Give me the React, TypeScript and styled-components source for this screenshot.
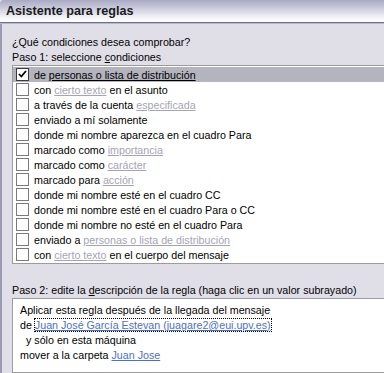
import React from "react";
import styled, { createGlobalStyle } from "styled-components";

const GlobalStyle = createGlobalStyle`
  html, body {
    margin: 0;
    padding: 0;
    overflow: hidden;
    background: #e0dfe8;
  }
`;

const Window = styled.div`
  width: 384px;
  height: 373px;
  overflow: hidden;
  background: #e0dfe8;
  font-family: Tahoma, "Liberation Sans", Arial, sans-serif;
  font-size: 10.7px;
  color: #000;
  display: flex;
  flex-direction: column;
`;

const TitleBar = styled.div`
  height: 22px;
  padding-left: 6px;
  display: flex;
  align-items: center;
  font-size: 12.6px;
  font-weight: bold;
  color: #1a1a1a;
  background: linear-gradient(#a9a9c2 0%, #c9c9da 35%, #f4f4f8 80%, #ffffff 100%);
  border-top-left-radius: 4px;
  border-bottom: 1px solid #6f6f8c;
  box-shadow: 0 1px 0 #b8b8cc;
`;

const Body = styled.div`
  flex: 1;
  border-left: 2px solid #9a9ab2;
  margin-top: 1px;
  padding: 11px 0 0 10px;
  display: flex;
  flex-direction: column;
`;

const Label = styled.div<{ $gap?: number }>`
  line-height: 15px;
  height: 15px;
  white-space: nowrap;
  margin-top: ${(p) => p.$gap ?? 0}px;
`;

const Key = styled.span`
  text-decoration: underline;
`;

const ListBox = styled.div`
  width: 420px;
  background: #fff;
  border: 1px solid #9c9c9c;
  padding: 1px 0;
`;

const Row = styled.div<{ $selected?: boolean }>`
  height: 15px;
  display: flex;
  align-items: center;
  white-space: nowrap;
  padding-left: 3px;
  background: ${(p) => (p.$selected ? "#b3b4bd" : "transparent")};
`;

const Check = styled.span<{ $on?: boolean }>`
  width: 11px;
  height: 11px;
  border: 1px solid ${(p) => (p.$on ? "#3a3a3a" : "#7a7a7a")};
  background: #fff;
  margin-right: 5px;
  display: inline-flex;
  align-items: center;
  justify-content: center;
  flex: none;
`;

const GrayLink = styled.span`
  color: #a4a4b4;
  text-decoration: underline;
`;

const DarkLink = styled.span`
  text-decoration: underline;
`;

const DescBox = styled.div`
  width: 420px;
  flex: 1;
  background: #fff;
  border: 1px solid #9c9c9c;
  padding: 4px 7px;
`;

const DescLine = styled.div<{ $indent?: number }>`
  height: 15px;
  line-height: 15px;
  white-space: nowrap;
  padding-left: ${(p) => p.$indent ?? 0}px;
`;

const BlueLink = styled.span<{ $focus?: boolean }>`
  color: #4a6fd0;
  text-decoration: underline;
  ${(p) => (p.$focus ? "outline: 1px dotted #000; outline-offset: 0;" : "")}
`;

type Part = string | { link: string };

const conditions: Part[][] = [
  ["de ", { link: "personas o lista de distribución" }],
  ["con ", { link: "cierto texto" }, " en el asunto"],
  ["a través de la cuenta ", { link: "especificada" }],
  ["enviado a mí solamente"],
  ["donde mi nombre aparezca en el cuadro Para"],
  ["marcado como ", { link: "importancia" }],
  ["marcado como ", { link: "carácter" }],
  ["marcado para ", { link: "acción" }],
  ["donde mi nombre esté en el cuadro CC"],
  ["donde mi nombre esté en el cuadro Para o CC"],
  ["donde mi nombre no esté en el cuadro Para"],
  ["enviado a ", { link: "personas o lista de distribución" }],
  ["con ", { link: "cierto texto" }, " en el cuerpo del mensaje"],
];

const Tick = () => (
  <svg width="9" height="9" viewBox="0 0 9 9">
    <path d="M1 4 L3.3 6.5 L8 1" fill="none" stroke="#000" strokeWidth="1.8" />
  </svg>
);

const App: React.FC = () => {
  return (
    <Window>
      <GlobalStyle />
      <TitleBar>Asistente para reglas</TitleBar>
      <Body>
        <Label>¿Qué condiciones desea comprobar?</Label>
        <Label>
          Paso 1: seleccione <Key>c</Key>ondiciones
        </Label>
        <ListBox>
          {conditions.map((parts, i) => (
            <Row key={i} $selected={i === 0}>
              <Check $on={i === 0}>{i === 0 && <Tick />}</Check>
              <span>
                {parts.map((p, j) =>
                  typeof p === "string" ? (
                    <React.Fragment key={j}>{p}</React.Fragment>
                  ) : i === 0 ? (
                    <DarkLink key={j}>{p.link}</DarkLink>
                  ) : (
                    <GrayLink key={j}>{p.link}</GrayLink>
                  )
                )}
              </span>
            </Row>
          ))}
        </ListBox>
        <Label $gap={19}>
          Paso 2: edite la <Key>d</Key>escripción de la regla (haga clic en un valor subrayado)
        </Label>
        <DescBox>
          <DescLine>Aplicar esta regla después de la llegada del mensaje</DescLine>
          <DescLine>
            de <BlueLink $focus>Juan José García Estevan (juagare2@eui.upv.es)</BlueLink>
          </DescLine>
          <DescLine $indent={6}>y sólo en esta máquina</DescLine>
          <DescLine>
            mover a la carpeta <BlueLink>Juan Jose</BlueLink>
          </DescLine>
        </DescBox>
      </Body>
    </Window>
  );
};

export default App;
